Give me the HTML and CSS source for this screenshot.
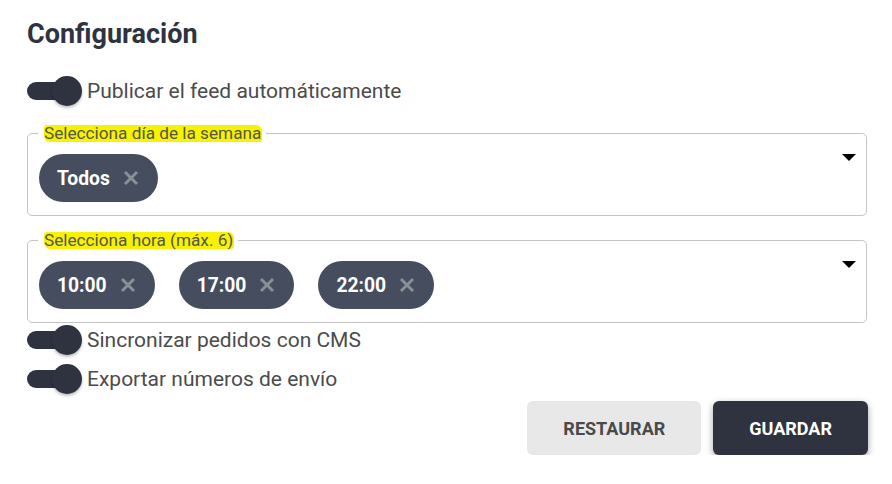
FILE: index.html
```html
<!DOCTYPE html>
<html lang="es">
<head>
<meta charset="utf-8">
<title>Configuración</title>
<link rel="stylesheet" href="styles.css">
</head>
<body>
<div class="page">
  <h1 class="title">Configuración</h1>

  <label class="toggle-row row-first">
    <span class="switch"><span class="track"></span><span class="thumb"></span></span>
    <span class="toggle-label">Publicar el feed automáticamente</span>
  </label>

  <fieldset class="select-box box-days">
    <legend class="select-legend"><span class="marker">Selecciona día de la semana</span></legend>
    <div class="select-content">
      <div class="chips">
        <span class="chip"><span class="chip-text">Todos</span><svg class="chip-x" viewBox="0 0 16 16"><path d="M2 2 L14 14 M14 2 L2 14"/></svg></span>
      </div>
      <span class="caret"></span>
    </div>
  </fieldset>

  <fieldset class="select-box box-hours">
    <legend class="select-legend"><span class="marker">Selecciona hora (máx. 6)</span></legend>
    <div class="select-content">
      <div class="chips">
        <span class="chip"><span class="chip-text">10:00</span><svg class="chip-x" viewBox="0 0 16 16"><path d="M2 2 L14 14 M14 2 L2 14"/></svg></span>
        <span class="chip"><span class="chip-text">17:00</span><svg class="chip-x" viewBox="0 0 16 16"><path d="M2 2 L14 14 M14 2 L2 14"/></svg></span>
        <span class="chip"><span class="chip-text">22:00</span><svg class="chip-x" viewBox="0 0 16 16"><path d="M2 2 L14 14 M14 2 L2 14"/></svg></span>
      </div>
      <span class="caret"></span>
    </div>
  </fieldset>

  <label class="toggle-row row-second">
    <span class="switch"><span class="track"></span><span class="thumb"></span></span>
    <span class="toggle-label">Sincronizar pedidos con CMS</span>
  </label>

  <label class="toggle-row row-third">
    <span class="switch"><span class="track"></span><span class="thumb"></span></span>
    <span class="toggle-label">Exportar números de envío</span>
  </label>

  <div class="actions">
    <button class="btn btn-light" type="button">RESTAURAR</button>
    <button class="btn btn-dark" type="button">GUARDAR</button>
  </div>
</div>
</body>
</html>
```

FILE: styles.css
```css
* { box-sizing: border-box; }

html, body {
  margin: 0;
  padding: 0;
  background: #ffffff;
}

body {
  font-family: Roboto, "Liberation Sans", Arial, sans-serif;
  color: #4b4b4b;
}

.page {
  width: 892px;
  padding: 0 25px 0 27px;
  display: flex;
  flex-direction: column;
}

.title {
  margin: 18px 0 0;
  font-size: 27px;
  line-height: 32px;
  font-weight: 700;
  color: #2f3340;
}

/* toggles */
.toggle-row {
  display: flex;
  align-items: center;
  height: 30px;
  gap: 5px;
}

.row-first { margin-top: 26px; }
.row-second { margin-top: 2px; }
.row-third { margin-top: 9px; }

.switch {
  position: relative;
  width: 55px;
  height: 30px;
  flex: none;
}

.track {
  position: absolute;
  left: 0;
  top: 6px;
  width: 50px;
  height: 18px;
  border-radius: 9px;
  background: #2f3340;
}

.thumb {
  position: absolute;
  left: 25px;
  top: 0;
  width: 30px;
  height: 30px;
  border-radius: 50%;
  background: #2f3340;
  box-shadow: 0 2px 3px rgba(0, 0, 0, 0.25);
}

.toggle-label {
  font-size: 21px;
  line-height: 30px;
  color: #4b4b4b;
}

/* select boxes */
.select-box {
  margin: 19px 0 0;
  padding: 13px 10px 13px 11px;
  border: 1px solid #c4c4c4;
  border-radius: 5px;
  min-width: 0;
}

.box-hours { margin-top: 16px; }

.select-legend {
  padding: 0 4px 0 6px;
  margin-left: -1px;
  line-height: 16px;
  height: 16px;
}

.marker {
  display: inline-block;
  height: 17px;
  line-height: 16px;
  font-size: 17.2px;
  color: #555555;
  background: #f7f200;
  border-radius: 3px 6px 3px 6px;
  vertical-align: top;
  padding-right: 1px;
}

.select-content {
  display: flex;
  align-items: flex-start;
}

.chips {
  display: flex;
  flex-wrap: wrap;
  gap: 24px;
}

.caret {
  margin-left: auto;
  width: 0;
  height: 0;
  border-left: 7px solid transparent;
  border-right: 7px solid transparent;
  border-top: 7px solid #000000;
  flex: none;
}

.chip {
  display: inline-flex;
  align-items: center;
  height: 48px;
  padding: 0 19px 0 18px;
  border-radius: 24px;
  background: #464d5e;
  gap: 13px;
}

.chip-text {
  font-size: 19.3px;
  font-weight: 700;
  color: #ffffff;
}

.chip-x {
  width: 16px;
  height: 16px;
  fill: none;
  stroke: #8b8f98;
  stroke-width: 2.9;
}

/* actions */
.actions {
  margin-top: 7px;
  margin-right: -1px;
  display: flex;
  justify-content: flex-end;
  gap: 12px;
}

.btn {
  height: 54px;
  padding: 0 36px;
  border: none;
  border-radius: 6px;
  font-family: Roboto, "Liberation Sans", Arial, sans-serif;
  font-size: 18px;
  font-weight: 700;
  cursor: pointer;
}

.btn-light {
  background: #e8e8e8;
  color: #4a4a4a;
}

.btn-dark {
  background: #2f3340;
  color: #ffffff;
  box-shadow: 0 3px 6px rgba(0, 0, 0, 0.25), 0 2px 10px rgba(0, 0, 0, 0.12);
}
```
